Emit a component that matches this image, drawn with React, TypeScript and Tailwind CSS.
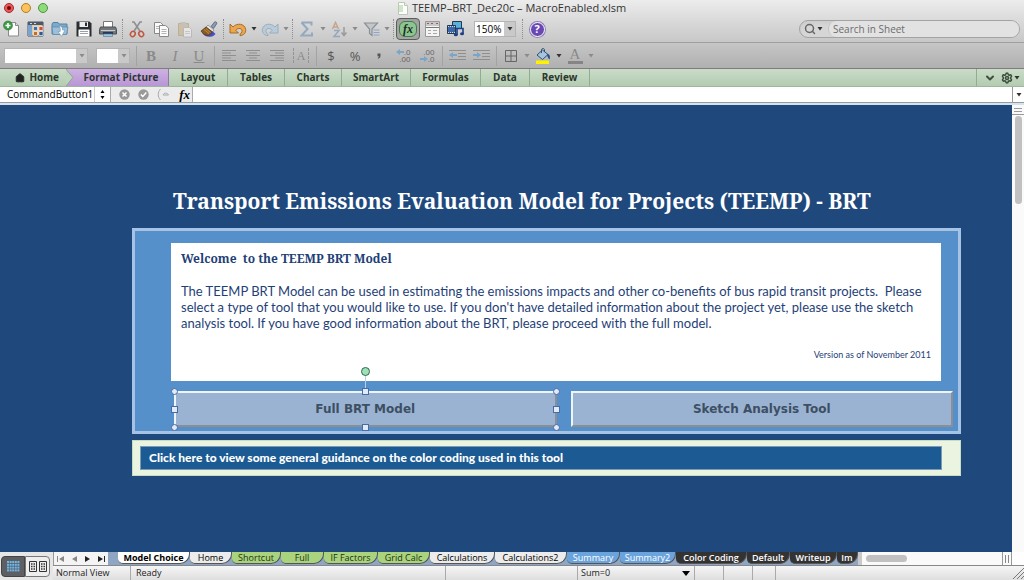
import type { ReactNode } from 'react'
import { House, Search, ChevronDown, Settings } from 'lucide-react'
import clsx from 'clsx'

function Tool({ label, children, active }: { label: string; children: ReactNode; active?: boolean }) {
  return (
    <button
      type="button"
      aria-label={label}
      title={label}
      className={clsx(
        'flex h-[22px] w-6 shrink-0 items-center justify-center rounded',
        active && 'border border-[#5c5c5c] bg-[#a4a7a4] shadow-inner'
      )}
    >
      {children}
    </button>
  )
}

function Caret({ dim }: { dim?: boolean }) {
  return (
    <span className="flex w-2 shrink-0 justify-center">
      <svg width="6" height="4" viewBox="0 0 6 4" fill={dim ? '#8a8a8a' : '#333'}>
        <path d="M0.5 0h5L3 3.5z" />
      </svg>
    </span>
  )
}

function Dots() {
  return (
    <span className="flex w-[5px] shrink-0 justify-center">
      <span className="h-5 border-l border-dotted border-[#8d8d8d]" />
    </span>
  )
}

function Line() {
  return (
    <span className="flex w-1.5 shrink-0 justify-center">
      <span className="h-5 border-l border-[#a3a3a3]" />
    </span>
  )
}

function Combo({ label, value, className }: { label: string; value: string; className: string }) {
  return (
    <div className={clsx('flex h-4 shrink-0 border border-[#b4b4b4] bg-white', className)}>
      <select aria-label={label} className="min-w-0 flex-1 appearance-none bg-white pl-px text-[10px] leading-3 text-black">
        <option>{value}</option>
      </select>
      <span className="flex w-[11px] items-center justify-center bg-[#c9c9c9]">
        <Caret dim={!value} />
      </span>
    </div>
  )
}

function Lines({ rows }: { rows: [number, number][] }) {
  return (
    <svg width="15" height="13" viewBox="0 0 15 13" stroke="#8f8f8f">
      {rows.map(([a, b], i) => (
        <path key={i} d={`M${a} ${i * 2.5 + 1.5}H${b}`} />
      ))}
    </svg>
  )
}

function TitleBar() {
  return (
    <header className="flex h-4 items-center px-1">
      <div className="flex w-24 gap-[7px]">
        <button type="button" aria-label="Close" className="flex h-2.5 w-2.5 items-center justify-center rounded-full border border-[#a12d2d] bg-[#f0565a]">
          <span className="h-1 w-1 rounded-full bg-[#6d0a0a]" />
        </button>
        <button type="button" aria-label="Minimize" className="h-2.5 w-2.5 rounded-full border border-[#b27a28] bg-[#fbc35a]" />
        <button type="button" aria-label="Zoom" className="h-2.5 w-2.5 rounded-full border border-[#4e9440] bg-[#8ddb7b]" />
      </div>
      <h1 className="flex flex-1 items-center justify-center gap-1 text-[11px] leading-4 text-[#333]">
        <svg width="10" height="13" viewBox="0 0 10 13">
          <path d="M.5.5h6l3 3v9h-9z" fill="#fff" stroke="#b9c9b4" />
          <path d="M1 3h4v7H1z" fill="#cfe6c8" />
          <path d="M6.500 .5v3h3" fill="#e9f2e6" stroke="#b9c9b4" />
        </svg>
        TEEMP–BRT_Dec20c – MacroEnabled.xlsm
      </h1>
      <div className="w-24" />
    </header>
  )
}

function StandardToolbar() {
  return (
    <div className="flex h-[27px] items-center border-b border-[#a0a0a0] pr-1">
      <Tool label="New">
        <svg width="18" height="18" viewBox="0 0 18 18">
          <path d="M5.500 2.500h7l3 3v10.500h-10z" fill="#fcfcfc" stroke="#8b8b8b" />
          <path d="M12.500 2.500v3h3" fill="#ddd" stroke="#8b8b8b" />
          <circle cx="5" cy="5.500" r="4.500" fill="#3f9a48" stroke="#2d7236" strokeWidth=".6" />
          <path d="M5 3v5M2.500 5.500h5" stroke="#fff" strokeWidth="1.600" />
        </svg>
      </Tool>
      <Tool label="Gallery">
        <svg width="18" height="17" viewBox="0 0 18 17">
          <path d="M1 1h15v14H1z" fill="#e8c99a" stroke="#49535f" />
          <path d="M1 1h15v3H1z" fill="#4a5a6c" />
          <path d="M3 2.500h2M7 2.500h2" stroke="#cdd6df" />
          <path d="M1 4h4v11H1z" fill="#7aa4cf" />
          <path d="M6.500 5.500h4v4h-4z" fill="#3f6fa8" stroke="#fff" strokeWidth=".6" />
          <path d="M12 5.500h4v4h-4z" fill="#c8543c" stroke="#fff" strokeWidth=".6" />
          <path d="M6.500 10.500h4v4h-4z" fill="#c66d2d" stroke="#fff" strokeWidth=".6" />
          <path d="M12 10.500h4v4h-4z" fill="#2f5a8e" stroke="#fff" strokeWidth=".6" />
        </svg>
      </Tool>
      <Tool label="Open">
        <svg width="18" height="17" viewBox="0 0 18 17">
          <path d="M1 3l1-1.500h5l1 1.500h8v10H1z" fill="#7fa9c9" stroke="#5684a8" />
          <path d="M1 6h16l-1.500 7.500H2z" fill="#9cc0da" stroke="#5684a8" strokeWidth=".7" />
          <path d="M8.500 5c2 0 3 1 3 4h2.500l-3.500 6.500L7 10.500h2.200C9.500 8 9.500 6.500 8 5z" fill="#fff" stroke="#5b86a7" strokeWidth=".5" />
        </svg>
      </Tool>
      <Tool label="Save">
        <svg width="16" height="16" viewBox="0 0 16 16">
          <path d="M.5.500h13l2 2v13H.5z" fill="#2b2d30" />
          <path d="M3.500 1h8.500v5H3.500z" fill="#e9edf0" />
          <path d="M9 1.500h2v3.500H9z" fill="#2b2d30" />
          <path d="M2.500 8.500h11v7h-11z" fill="#fff" />
          <path d="M4 10.500h8M4 12.500h8" stroke="#9aa3ab" />
        </svg>
      </Tool>
      <Tool label="Print">
        <svg width="18" height="16" viewBox="0 0 18 16">
          <path d="M4.500.5h9v6h-9z" fill="#fff" stroke="#777" />
          <path d="M1.500 6h15l1 2.500v4.500H.5V8.500z" fill="#74787c" stroke="#4a4d50" />
          <path d="M2 9.500h14" stroke="#c9cdd0" />
          <path d="M4 11h10v2H4z" fill="#263a55" />
          <path d="M4.500 13h9v2.500h-9z" fill="#9cc8ec" stroke="#57728b" strokeWidth=".6" />
        </svg>
      </Tool>
      <Dots />
      <Tool label="Cut">
        <svg width="16" height="17" viewBox="0 0 16 17">
          <path d="M3 1l2 0 6.500 10M13 1h-2L4.500 11" fill="none" stroke="#8c8f93" strokeWidth="1.600" />
          <ellipse cx="3.800" cy="13" rx="2.300" ry="2.700" fill="none" stroke="#c0573f" strokeWidth="1.600" transform="rotate(30 3.800 13)" />
          <ellipse cx="12.200" cy="13" rx="2.300" ry="2.700" fill="none" stroke="#c0573f" strokeWidth="1.600" transform="rotate(-30 12.200 13)" />
        </svg>
      </Tool>
      <Tool label="Copy">
        <svg width="17" height="17" viewBox="0 0 17 17" fill="#fafafa" stroke="#888">
          <path d="M1.500 1.500h6l2.500 2.500v8.500H1.500z" />
          <path d="M6.500 4.500h6L15.500 7v8.500h-9z" />
          <path d="M8.500 8.500h5M8.500 10.500h5M8.500 12.500h5M3 5.500h3M3 7.500h3" stroke="#b5b5b5" />
        </svg>
      </Tool>
      <Tool label="Paste">
        <svg width="16" height="17" viewBox="0 0 16 17" opacity=".7">
          <path d="M1.500 2.500h10v12h-10z" fill="#c9b894" stroke="#b3a17a" />
          <path d="M4 1h5v3H4z" fill="#b9b9b9" />
          <path d="M6.500 6.500h6l2 2v7.500h-8z" fill="#eee" stroke="#b0b0b0" />
          <path d="M8 10.500h5M8 12.500h5" stroke="#c4c4c4" />
        </svg>
      </Tool>
      <Tool label="Format painter">
        <svg width="18" height="17" viewBox="0 0 18 17">
          <path d="M2 11.500c2 5 10 6 13.500 1.500l-3-3z" fill="#4450c8" />
          <path d="M11 5.500L14.500 1c1-1 3 .5 2.200 1.800L13.500 7.500z" fill="#8a9bb4" stroke="#4a5568" strokeWidth=".7" />
          <path d="M8 4l6 5-1.500 2-6.500-5z" fill="#e3e6ea" stroke="#6b7280" strokeWidth=".6" />
          <path d="M6 6l6.500 5-4 3.500c-3 0-6-2-7.500-4.500z" fill="#8a5a22" stroke="#4f3413" strokeWidth=".7" />
          <path d="M4 8.500l5 4M6 7.500l4.500 4" stroke="#d79a45" strokeWidth=".8" />
        </svg>
      </Tool>
      <Dots />
      <Tool label="Undo">
        <svg width="18" height="16" viewBox="0 0 18 16">
          <path d="M1 3v9h8.500L6.700 9.200C9 6.500 13.500 7 13 10.500c-.2 1.200-1 2-2 2.700v1.500c4-.5 6-3 5.700-6C16 2.500 8 1.500 4 6z" fill="#eda64b" stroke="#9d6324" strokeWidth=".9" />
        </svg>
      </Tool>
      <Caret />
      <Tool label="Redo">
        <svg width="18" height="16" viewBox="0 0 18 16">
          <path d="M17 3v9H8.500l2.800-2.800C9 6.500 4.500 7 5 10.500c.2 1.200 1 2 2 2.700v1.500C3 14.200 1 11.700 1.300 8.700 2 2.500 10 1.500 14 6z" fill="#b9cbd9" stroke="#93a9bb" strokeWidth=".9" />
        </svg>
      </Tool>
      <Caret dim />
      <Dots />
      <Tool label="AutoSum">
        <svg width="14" height="16" viewBox="0 0 14 16">
          <path d="M1.500 1.500h10v3M1.500 1.500L7.500 8l-6 6.500h10.500v-3" fill="none" stroke="#93a9c0" strokeWidth="2" />
        </svg>
      </Tool>
      <Caret dim />
      <Tool label="Sort">
        <svg width="18" height="17" viewBox="0 0 18 17" fill="none">
          <path d="M2.500 8L5.500 1.500 8.500 8M3.500 6h4" stroke="#c5a58c" strokeWidth="1.500" />
          <path d="M4 9.500h5L4 15.500h6" stroke="#93a9c0" strokeWidth="1.500" />
          <path d="M14 6v8M11.500 11.500L14 14.500l2.500-3" stroke="#9b9b9b" strokeWidth="1.500" />
        </svg>
      </Tool>
      <Caret dim />
      <Tool label="Filter">
        <svg width="17" height="16" viewBox="0 0 17 16">
          <path d="M1.500 2h13L9 8v6.500l-2.500-2V8z" fill="#c3c7ca" stroke="#8b9196" strokeWidth="1.200" />
          <path d="M10.500 9h6M10.500 11.500h6M10.500 14h6" stroke="#8da5c6" strokeWidth="1.200" />
        </svg>
      </Tool>
      <Caret dim />
      <Dots />
      <Tool label="Formula builder" active>
        <span className="flex h-4 w-[18px] items-center justify-center rounded-md border border-[#44784b] bg-[#8cc591] font-['Liberation_Serif',serif] text-[12px] font-bold italic leading-3 text-[#1c2c1e]">
          fx
        </span>
      </Tool>
      <Tool label="Toolbox">
        <svg width="15" height="16" viewBox="0 0 15 16">
          <path d="M.5.500h14v15H.5z" fill="#f4f4f4" stroke="#999" />
          <path d="M1 1h13v4H1z" fill="#c5c9cd" />
          <path d="M2 2.500h2M6 2.500h2M11 2.500h2" stroke="#b5533c" strokeWidth="1.200" />
          <path d="M1 6.500h13" stroke="#777" />
          <path d="M3 9.500h3M3 12.500h3M8 9.500h4M8 12.500h4" stroke="#a8a8a8" />
        </svg>
      </Tool>
      <Tool label="Media browser">
        <svg width="18" height="16" viewBox="0 0 18 16">
          <path d="M5.500.5h9v7h-9z" fill="#56b3dc" stroke="#26384d" />
          <path d="M.5 4.500h8v8h-8z" fill="#3d68a8" stroke="#26384d" />
          <path d="M1 5.500h7M1 11.500h7" stroke="#cfdcec" strokeDasharray="1 1" />
          <path d="M10 14V7.500h6V13" fill="none" stroke="#1d3f86" strokeWidth="1.600" />
          <ellipse cx="8.800" cy="13.700" rx="2" ry="1.500" fill="#1d3f86" />
          <ellipse cx="15" cy="12.700" rx="2" ry="1.500" fill="#1d3f86" />
        </svg>
      </Tool>
      <Combo label="Zoom level" value="150%" className="mr-1 ml-1.5 w-[42px]" />
      <Dots />
      <Tool label="Help">
        <span className="flex h-[15px] w-[15px] items-center justify-center rounded-full border border-white bg-[#6a48b4] text-[11px] font-bold leading-3 text-white ring-1 ring-[#8f7fb8]">
          ?
        </span>
      </Tool>
      <label className="ml-auto flex h-[18px] w-[221px] items-center rounded-full border border-[#a3a3a3] bg-[#d6d6d6] pl-1 shadow-inner">
        <Search className="h-3 w-3 text-[#666]" strokeWidth={3} />
        <Caret />
        <input
          aria-label="Search in Sheet"
          placeholder="Search in Sheet"
          className="ml-1 h-full min-w-0 flex-1 rounded-full border-l border-[#c4c4c4] bg-[#e2e2e2] pl-1 text-[10px] text-[#666] placeholder:text-[#6c6c6c]"
        />
      </label>
    </div>
  )
}

function FormatToolbar() {
  return (
    <div className="flex h-[26px] items-center border-b border-[#7d7d7d] bg-linear-to-b from-[#c6c6c6] to-[#b0b0b0] pl-1 font-['Liberation_Serif',serif] text-[15px] leading-4 text-[#8a8a8a]">
      <Combo label="Font" value="" className="w-[84px]" />
      <Combo label="Font size" value="" className="mr-[3px] ml-2 w-[34px]" />
      <Line />
      <Tool label="Bold"><b>B</b></Tool>
      <Tool label="Italic"><i>I</i></Tool>
      <Tool label="Underline"><u>U</u></Tool>
      <Line />
      <Tool label="Align left"><Lines rows={[[0, 14], [0, 9], [0, 14], [0, 9], [0, 14]]} /></Tool>
      <Tool label="Center"><Lines rows={[[0, 14], [3, 11], [0, 14], [3, 11], [0, 14]]} /></Tool>
      <Tool label="Align right"><Lines rows={[[0, 14], [5, 14], [0, 14], [5, 14], [0, 14]]} /></Tool>
      <Tool label="Merge">
        <span className="flex h-[15px] w-4 items-center justify-center border-x border-dashed border-[#949494] text-[12px]">A</span>
      </Tool>
      <Line />
      <Tool label="Currency"><span className="font-['Open_Sans',sans-serif] text-[13px] text-[#555]">$</span></Tool>
      <Tool label="Percent"><span className="font-['Open_Sans',sans-serif] text-[13px] text-[#555]">%</span></Tool>
      <Tool label="Comma">
        <svg width="4" height="6" viewBox="0 0 4 6" fill="#555">
          <path d="M.5.5h3v2.200C3.500 4.200 2.500 5.200 1 5.700L.7 5c.8-.4 1.200-1 1.200-1.800H.5z" />
        </svg>
      </Tool>
      <Tool label="Increase decimal">
        <span className="flex flex-col items-end font-['Liberation_Sans',sans-serif] text-[8px] leading-[7px] text-[#666]">
          <span className="flex items-center">
            <svg width="8" height="6" viewBox="0 0 8 6" fill="#7ba5c6"><path d="M0 3l4-3v2h4v2H4v2z" /></svg>
            .0
          </span>
          <span>.00</span>
        </span>
      </Tool>
      <Tool label="Decrease decimal">
        <span className="flex flex-col items-end font-['Liberation_Sans',sans-serif] text-[8px] leading-[7px] text-[#666]">
          <span>.00</span>
          <span className="flex items-center">
            <svg width="8" height="6" viewBox="0 0 8 6" fill="#7ba5c6"><path d="M8 3L4 0v2H0v2h4v2z" /></svg>
            .0
          </span>
        </span>
      </Tool>
      <Line />
      <Tool label="Decrease indent">
        <svg width="17" height="13" viewBox="0 0 17 13" stroke="#8f8f8f">
          <path d="M0 1.500h17M9 4.500h8M9 7.500h8M0 10.500h17" />
          <path d="M0 6l4-3v2h4v2H4v2z" fill="#7ba5c6" stroke="none" />
        </svg>
      </Tool>
      <Tool label="Increase indent">
        <svg width="17" height="13" viewBox="0 0 17 13" stroke="#8f8f8f">
          <path d="M0 1.500h17M9 4.500h8M9 7.500h8M0 10.500h17" />
          <path d="M8 6L4 3v2H0v2h4v2z" fill="#7ba5c6" stroke="none" />
        </svg>
      </Tool>
      <Line />
      <Tool label="Borders">
        <svg width="12" height="12" viewBox="0 0 12 12" fill="none" stroke="#666">
          <path d="M.5.500h11v11H.5zM6 .5v11M.5 6h11" />
        </svg>
      </Tool>
      <Caret dim />
      <Tool label="Fill color">
        <svg width="16" height="16" viewBox="0 0 16 16">
          <path d="M1 12.500h13V16H1z" fill="#fff200" />
          <path d="M2 7l5.500-5 5.500 4.500-5.500 5z" fill="#a7c4dd" stroke="#2f5275" />
          <path d="M6.500 5V2c0-2 3-2 3 0v2" fill="none" stroke="#2f5275" />
          <path d="M12 6c2.500 0 3.500 2 2.500 5.500C13 10 12.500 9 12 6z" fill="#1f4f8c" />
        </svg>
      </Tool>
      <Caret />
      <Tool label="Font color">
        <span className="flex h-4 w-[15px] items-center justify-center border-b-[3px] border-[#858585] text-[15px] leading-3">A</span>
      </Tool>
      <Caret dim />
    </div>
  )
}

const ribbon = [
  ['Layout', 'w-[59px]'],
  ['Tables', 'w-[57px]'],
  ['Charts', 'w-[57px]'],
  ['SmartArt', 'w-[69px]'],
  ['Formulas', 'w-[70px]'],
  ['Data', 'w-[49px]'],
  ['Review', 'w-[60px]'],
]

function Ribbon() {
  return (
    <nav className="flex h-[18px] items-stretch border-b border-[#9fb59f] bg-linear-to-b from-[#cbdcc8] to-[#b2ccb1] text-[10px] font-bold text-[#2c352c]">
      <button type="button" className="flex w-[66px] items-center justify-end gap-1 pr-[7px]">
        <House className="h-2.5 w-2.5 fill-[#222]" strokeWidth={2.5} />
        Home
      </button>
      <button type="button" className="relative flex w-[103px] items-center justify-center border-r border-[#8f7aa5] bg-linear-to-b from-[#cdb2e2] to-[#b896d6] pl-2">
        <svg className="absolute top-0 left-0 h-full w-2" viewBox="0 0 8 17" preserveAspectRatio="none">
          <path d="M0 0l7 8.500L0 17z" fill="#bfd4bd" />
          <path d="M0 0l7 8.500L0 17" fill="none" stroke="#8fa48f" />
        </svg>
        Format Picture
      </button>
      {ribbon.map(([name, width]) => (
        <button key={name} type="button" className={clsx('border-r border-[#93ab93]', width)}>
          {name}
        </button>
      ))}
      <div className="ml-auto flex w-12 items-center justify-around border-l border-[#93ab93] pl-1 text-[#3f4f3f]">
        <button type="button" aria-label="Collapse ribbon"><ChevronDown className="h-3 w-3" strokeWidth={4} /></button>
        <button type="button" aria-label="Ribbon settings" className="flex items-center">
          <Settings className="h-3 w-3" strokeWidth={3} />
          <Caret />
        </button>
      </div>
    </nav>
  )
}

function FormulaBar() {
  return (
    <div className="flex h-4 items-stretch border-b border-[#9a9a9a] bg-white text-[10px] text-black">
      <input aria-label="Name box" defaultValue="CommandButton1" className="w-[95px] border-r border-[#ccc] pl-[7px]" />
      <button type="button" aria-label="Names" className="flex w-[15px] items-center justify-center">
        <svg width="5" height="9" viewBox="0 0 5 9"><path d="M.5 3L2.500 0l2 3zM.5 6l2 3 2-3z" /></svg>
      </button>
      <div className="flex w-[83px] items-center justify-between border-x border-[#aaa] bg-[#ececec] pr-0.5 pl-2">
        <button type="button" aria-label="Cancel">
          <svg width="11" height="11" viewBox="0 0 11 11">
            <circle cx="5.500" cy="5.500" r="5.200" fill="#999" />
            <path d="M3.500 3.500l4 4M7.500 3.500l-4 4" stroke="#fff" strokeWidth="1.500" />
          </svg>
        </button>
        <button type="button" aria-label="Enter">
          <svg width="11" height="11" viewBox="0 0 11 11">
            <circle cx="5.500" cy="5.500" r="5.200" fill="#999" />
            <path d="M2.800 5.500l2 2 3.500-4" fill="none" stroke="#fff" strokeWidth="1.500" />
          </svg>
        </button>
        <svg width="14" height="13" viewBox="0 0 14 13" fill="none" stroke="#aaa">
          <path d="M3.500 1C.5 4 .5 9 3.500 12M6 7c1-2.500 4.500-2.500 5.500 0z" />
        </svg>
        <button type="button" aria-label="Insert function" className="font-['Liberation_Serif',serif] text-[13px] font-bold italic leading-3">
          fx
        </button>
      </div>
      <input aria-label="Formula" className="min-w-0 flex-1" />
      <button type="button" aria-label="Expand formula bar" className="flex w-3 items-center justify-center border-l border-[#999]">
        <Caret />
      </button>
    </div>
  )
}

const handles = [
  '-top-[3px] -left-[3px] rounded-full',
  '-top-[3px] left-1/2 -ml-[3px]',
  '-top-[3px] -right-[3px] rounded-full',
  'top-1/2 -mt-[3px] -left-[3px]',
  'top-1/2 -mt-[3px] -right-[3px]',
  '-bottom-1 -left-[3px] rounded-full',
  '-bottom-1 left-1/2 -ml-[3px]',
  '-bottom-1 -right-[3px] rounded-full',
]

const commandButton =
  "h-9 w-full border-2 border-t-[#eef5f9] border-l-[#eef5f9] border-r-[#8b8f94] border-b-[#8b8f94] bg-[#9ab3d2] font-['DejaVu_Sans',sans-serif] text-[12px] font-bold text-[#3d4f63]"

function Worksheet() {
  return (
    <main className="min-w-0 flex-1 bg-[#1f497d] pt-[81px] pr-[51px] pl-[132px]">
      <h2 className="pl-[41px] font-['Noto_Serif','Liberation_Serif',serif] text-[21px] font-bold leading-[30px] whitespace-nowrap text-white">
        Transport Emissions Evaluation Model for Projects (TEEMP) - BRT
      </h2>
      <section className="mt-3 border-[3px] border-[#a6c2e5] bg-[#5590cb] pt-3 pr-[5px] pb-1 pl-9">
        <article className="mr-3 h-[138px] bg-white px-2.5 pt-1.5 text-[#1f3f77]">
          <h3 className="font-['Noto_Serif','Liberation_Serif',serif] text-[12px] font-bold leading-5 whitespace-pre">Welcome  to the TEEMP BRT Model</h3>
          <p className="mt-3.5 font-['Lato',sans-serif] text-[13px] leading-4 whitespace-pre">
            {`The TEEMP BRT Model can be used in estimating the emissions impacts and other co-benefits of bus rapid transit projects.  Please
select a type of tool that you would like to use. If you don't have detailed information about the project yet, please use the sketch
analysis tool. If you have good information about the BRT, please proceed with the full model.`}
          </p>
          <p className="mt-4 text-right font-['Lato',sans-serif] text-[9px] leading-4">Version as of November 2011</p>
        </article>
        <div className="mt-2.5 ml-[3px] grid grid-cols-2 gap-3.5">
          <div className="relative">
            <button type="button" className={commandButton}>Full BRT Model</button>
            <span className="absolute -top-4 left-1/2 h-4 w-px bg-[#b5d0ea]" />
            <span className="absolute -top-6 left-1/2 -ml-1 h-[9px] w-[9px] rounded-full border border-[#2b6b4c] bg-[#9fe0b8]" />
            {handles.map(pos => (
              <span key={pos} className={clsx('absolute h-[7px] w-[7px] border border-[#4a6aa5] bg-[#dfeafa]', pos)} />
            ))}
          </div>
          <button type="button" className={commandButton}>Sketch Analysis Tool</button>
        </div>
      </section>
      <div className="mt-1.5 border border-[#c9dcc4] bg-[#ebf4e0] py-[5px] pr-[18px] pl-[7px]">
        <button type="button" className="block h-6 w-full border border-[#7c9cb5] bg-[#1b5a92] pl-2 text-left font-['Lato',sans-serif] text-[12px] font-black text-white">
          Click here to view some general guidance on the color coding used in this tool
        </button>
      </div>
    </main>
  )
}

const sheets = [
  ['Model Choice', 'w-[72px] bg-white font-bold text-black'],
  ['Home', 'w-[42px] bg-[#ececec] text-black'],
  ['Shortcut', 'w-[49px] bg-[#a9d47d] text-[#223311]'],
  ['Full', 'w-[43px] bg-[#a9d47d] text-[#223311]'],
  ['IF Factors', 'w-[54px] bg-[#a9d47d] text-[#223311]'],
  ['Grid Calc', 'w-[52px] bg-[#a9d47d] text-[#223311]'],
  ['Calculations', 'w-[65px] bg-[#ececec] text-black'],
  ['Calculations2', 'w-[72px] bg-[#ececec] text-black'],
  ['Summary', 'w-[53px] bg-[#6ba3dc] text-white'],
  ['Summary2', 'w-[56px] bg-[#6ba3dc] text-white'],
  ['Color Coding', 'w-[71px] bg-[#333] font-semibold text-white'],
  ['Default', 'w-[43px] bg-[#333] font-semibold text-white'],
  ['Writeup', 'w-[47px] bg-[#333] font-semibold text-white'],
  ['Im', 'flex-1 bg-[#333] font-semibold text-white'],
]

function SheetBar() {
  return (
    <div className="flex h-[14px] border-b border-[#888] bg-white pr-3">
      <div className="flex w-[55px] items-center justify-around border-l border-[#999] bg-[#f4f4f4]">
        <button type="button" aria-label="First sheet"><svg width="8" height="6" viewBox="0 0 8 6" fill="#888"><path d="M0 0h1v6H0zM7 0v6L2 3z" /></svg></button>
        <button type="button" aria-label="Previous sheet"><svg width="6" height="6" viewBox="0 0 6 6" fill="#888"><path d="M5 0v6L0 3z" /></svg></button>
        <button type="button" aria-label="Next sheet"><svg width="6" height="6" viewBox="0 0 6 6" fill="#222"><path d="M1 0v6l5-3z" /></svg></button>
        <button type="button" aria-label="Last sheet"><svg width="8" height="6" viewBox="0 0 8 6" fill="#222"><path d="M7 0h1v6H7zM1 0v6l5-3z" /></svg></button>
      </div>
      <div className="flex w-[750px] min-w-0 bg-[#8fa5c4] pl-2.5 text-[9px] leading-3">
        {sheets.map(([name, style]) => (
          <button
            key={name}
            type="button"
            className={clsx('h-3 shrink-0 rounded-br-[10px] rounded-bl-[5px] border-r border-b border-[#555] whitespace-nowrap', style)}
          >
            {name}
          </button>
        ))}
      </div>
      <div className="flex flex-1 items-center border-l-4 border-[#c9c9c9] bg-[#fafafa] pl-1">
        <span className="h-[7px] w-[41px] rounded-full bg-[#c1c1c1]" />
        <span className="ml-auto flex h-full w-2.5 items-center justify-center gap-0.5 border-x border-[#999]">
          <span className="h-2 w-px bg-[#888]" />
          <span className="h-2 w-px bg-[#888]" />
        </span>
      </div>
    </div>
  )
}

function StatusBar() {
  return (
    <div className="flex h-[14px] items-stretch bg-linear-to-b from-[#f6f6f6] to-[#dedede] text-[9px] leading-[14px] text-[#222]">
      <span className="w-[78px] border-r border-[#aaa] pl-[3px]">Normal View</span>
      <span className="w-[315px] border-r border-[#aaa] pl-[5px]">Ready</span>
      <span className="w-[132px] border-r border-[#aaa]" />
      <span className="flex w-[117px] items-center justify-between border-r border-[#aaa] pr-1 pl-[3px]">
        Sum=0
        <svg width="8" height="5" viewBox="0 0 8 5"><path d="M0 0h8L4 5z" /></svg>
      </span>
      <span className="w-[29px] border-r border-[#aaa]" />
      <span className="w-[29px] border-r border-[#aaa]" />
      <span className="w-[23px] border-r border-[#aaa]" />
      <svg className="ml-auto" width="12" height="14" viewBox="0 0 12 14" stroke="#777">
        <path d="M1 13L12 2M5 13l7-7M9 13l3-3" />
      </svg>
    </div>
  )
}

const dots = [0, 1, 2, 3, 4].flatMap(x => [0, 1, 2, 3].map(y => [x, y]))

export default function App() {
  return (
    <div className="flex min-h-screen flex-col bg-linear-to-b from-[#ececec] to-[#c6c6c6] bg-[length:100%_44px] bg-no-repeat font-['Open_Sans',sans-serif]">
      <TitleBar />
      <StandardToolbar />
      <FormatToolbar />
      <Ribbon />
      <FormulaBar />
      <div className="flex flex-1 border-t-2 border-[#d5e2f0]">
        <Worksheet />
        <aside className="flex w-3 flex-col items-center bg-[#fafafa]">
          <span className="flex h-2.5 w-full flex-col items-center justify-center gap-0.5 border-b border-[#999]">
            <span className="h-px w-2 bg-[#999]" />
            <span className="h-px w-2 bg-[#999]" />
          </span>
          <span className="mt-px ml-px h-[88px] w-[7px] rounded-full bg-[#c1c1c1]" />
        </aside>
      </div>
      <footer className="flex bg-[#e6e6e6]">
        <div className="flex w-[53px] items-center pl-px">
          <button type="button" aria-label="Normal View" className="flex h-[21px] w-6 items-center justify-center rounded-l border border-[#444] bg-[#5d5f62]">
            <svg width="13" height="11" viewBox="0 0 13 11" fill="#6cb8ee">
              {dots.map(([x, y]) => (
                <rect key={`${x}${y}`} x={x * 2.6} y={y * 2.8} width="2" height="2" />
              ))}
            </svg>
          </button>
          <button type="button" aria-label="Page Layout View" className="flex h-[21px] w-[25px] items-center justify-center gap-0.5 rounded-r border border-[#777] bg-[#eee]">
            {['left', 'right'].map(side => (
              <svg key={side} width="8" height="11" viewBox="0 0 8 11" fill="none" stroke="#333">
                <path d="M.5.500h7v10h-7z" />
                <path d="M2 3h4M2 5.500h4M2 8h4" strokeDasharray="1 .5" strokeWidth="1.500" />
              </svg>
            ))}
          </button>
        </div>
        <div className="min-w-0 flex-1">
          <SheetBar />
          <StatusBar />
        </div>
      </footer>
    </div>
  )
}
